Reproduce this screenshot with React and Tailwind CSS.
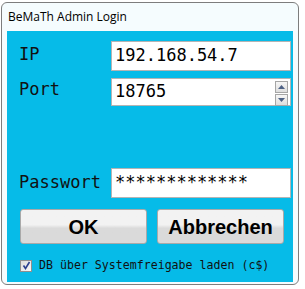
import React from 'react'

const mono = { fontFamily: '"DejaVu Sans Mono", "Liberation Mono", monospace' }

function Field({ label, value, spinner, className = '', labelClass = '' }) {
  return (
    <div className={`flex items-center ${className}`}>
      <div className={`w-[92px] text-[17px] text-[#111] ${labelClass}`} style={mono}>{label}</div>
      <div className="relative flex h-full w-[180px] items-center border border-[#b4b4b4] bg-white pl-[3px] text-[17px] text-black" style={mono}>
        {value}
        {spinner && (
          <div className="absolute right-[2px] top-[2px] flex flex-col gap-[1px]">
            <div className="flex h-[12px] w-[13px] items-center justify-center border border-[#a6a6a6] bg-gradient-to-b from-[#f6f6f6] to-[#dedede]">
              <svg width="7" height="4" viewBox="0 0 7 4"><path d="M3.5 0L7 4H0Z" fill="#4d6185" /></svg>
            </div>
            <div className="flex h-[12px] w-[13px] items-center justify-center border border-[#a6a6a6] bg-gradient-to-b from-[#f6f6f6] to-[#dedede]">
              <svg width="7" height="4" viewBox="0 0 7 4"><path d="M0 0H7L3.5 4Z" fill="#4d6185" /></svg>
            </div>
          </div>
        )}
      </div>
    </div>
  )
}

function Btn({ children }) {
  return (
    <button className="h-[35px] w-[127px] rounded-[3px] border border-[#a9a9a9] bg-gradient-to-b from-[#f2f2f2] from-45% to-[#dadada] to-55% text-[20px] font-bold text-black" style={{ fontFamily: '"Liberation Sans", Arial, sans-serif' }}>
      {children}
    </button>
  )
}

export default function App() {
  return (
    <div className="h-[289px] w-[305px] bg-white pl-[1px] pt-[2px]">
      <div className="flex h-[283px] w-[298px] flex-col rounded-[6px] border border-[#7d7d7d] bg-[#f5fcfe] px-[5px] pb-[2px]">
        <div className="flex h-[28px] items-center pl-[1px] text-[12px] text-black" style={{ fontFamily: '"Open Sans", "Noto Sans", sans-serif' }}>
          BeMaTh Admin Login
        </div>
        <div className="flex flex-1 flex-col bg-[#06bbe8] pl-[12px] pt-[10px]">
          <Field label="IP" value="192.168.54.7" className="h-[30px]" labelClass="mb-[2px]" />
          <Field label="Port" value="18765" spinner className="mt-[7px] h-[28px]" labelClass="mb-[5px]" />
          <Field label="Passwort" value="*************" className="mt-[62px] h-[30px]" />
          <div className="ml-[1px] mt-[11px] flex gap-[10px]">
            <Btn>OK</Btn>
            <Btn>Abbrechen</Btn>
          </div>
          <div className="ml-[1px] mt-[13px] flex items-center gap-[7px]">
            <div className="flex h-[12px] w-[12px] items-center justify-center border border-[#8f8f8f] bg-gradient-to-br from-[#dcdcdc] to-[#f8f8f8]">
              <svg width="9" height="9" viewBox="0 0 9 9"><path d="M1.5 4.5L3.5 7.5L7.5 1" stroke="#2a3f8f" strokeWidth="1.6" fill="none" /></svg>
            </div>
            <span className="text-[11.6px] text-[#111]" style={mono}>DB über Systemfreigabe laden (c$)</span>
          </div>
        </div>
      </div>
    </div>
  )
}
